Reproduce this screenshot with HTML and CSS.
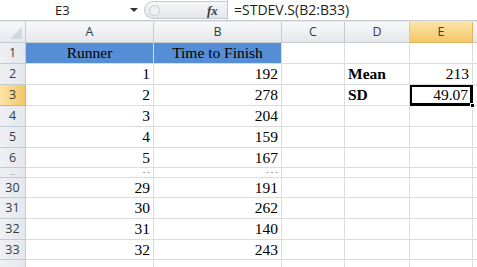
FILE: index.html
```html
<!DOCTYPE html>
<html>
<head>
<meta charset="utf-8">
<link rel="stylesheet" href="styles.css">
</head>
<body>
<div class="fbar">
  <div class="namebox"><span class="nm">E3</span><span class="dd"></span></div>
  <div class="fxzone"><span class="grip"></span><span class="fx">fx</span></div>
  <div class="formula">=STDEV.S(B2:B33)</div>
</div>
<div class="gap"></div>
<div class="sheet">
  <div class="ch corner"><span class="tri"></span></div>
  <div class="ch">A</div><div class="ch">B</div><div class="ch">C</div><div class="ch">D</div><div class="ch sel">E</div><div class="ch"></div>

  <div class="rh">1</div><div class="c blue ctr">Runner</div><div class="c blue ctr">Time to Finish</div><div class="c"></div><div class="c"></div><div class="c"></div><div class="c"></div>
  <div class="rh">2</div><div class="c num">1</div><div class="c num">192</div><div class="c"></div><div class="c b">Mean</div><div class="c num">213</div><div class="c"></div>
  <div class="rh sel">3</div><div class="c num">2</div><div class="c num">278</div><div class="c"></div><div class="c b">SD</div><div class="c num active">49.07<span class="handle"></span></div><div class="c"></div>
  <div class="rh">4</div><div class="c num">3</div><div class="c num">204</div><div class="c"></div><div class="c"></div><div class="c"></div><div class="c"></div>
  <div class="rh">5</div><div class="c num">4</div><div class="c num">159</div><div class="c"></div><div class="c"></div><div class="c"></div><div class="c"></div>
  <div class="rh">6</div><div class="c num">5</div><div class="c num">167</div><div class="c"></div><div class="c"></div><div class="c"></div><div class="c"></div>
  <div class="rh squash">--</div><div class="c num squash">- -</div><div class="c num squash">- - -</div><div class="c"></div><div class="c"></div><div class="c"></div><div class="c"></div>
  <div class="rh">30</div><div class="c num">29</div><div class="c num">191</div><div class="c"></div><div class="c"></div><div class="c"></div><div class="c"></div>
  <div class="rh">31</div><div class="c num">30</div><div class="c num">262</div><div class="c"></div><div class="c"></div><div class="c"></div><div class="c"></div>
  <div class="rh">32</div><div class="c num">31</div><div class="c num">140</div><div class="c"></div><div class="c"></div><div class="c"></div><div class="c"></div>
  <div class="rh">33</div><div class="c num">32</div><div class="c num">243</div><div class="c"></div><div class="c"></div><div class="c"></div><div class="c"></div>
  <div class="rh"></div><div class="c"></div><div class="c"></div><div class="c"></div><div class="c"></div><div class="c"></div><div class="c"></div>
</div>
</body>
</html>
```
FILE: styles.css
```css
* { box-sizing: border-box; margin: 0; padding: 0; }
html, body { width: 477px; height: 267px; overflow: hidden; background: #fff; }
body { font-family: "Liberation Serif", "Times New Roman", serif; }

.fbar {
  display: flex;
  height: 21px;
  border-bottom: 1px solid #c6cbd1;
  background: #fff;
  font-family: "Open Sans", "Liberation Sans", sans-serif;
  font-size: 13px;
  color: #1e1e1e;
}
.namebox {
  width: 142px;
  position: relative;
  display: flex;
  align-items: center;
}
.nm { position: absolute; left: 55px; top: 1px; line-height: 18px; }
.dd {
  position: absolute; left: 130px; top: 8px;
  width: 0; height: 0;
  border-left: 4px solid transparent; border-right: 4px solid transparent;
  border-top: 4px solid #333;
}
.fxzone {
  width: 83px;
  margin: 1px 0 1px 2px;
  background: linear-gradient(#f5f6f7, #e3e6e9);
  border: 1px solid #c3c8ce;
  border-right: none;
  border-radius: 9px 0 0 9px;
  position: relative;
}
.grip {
  position: absolute; left: 4px; top: 3px;
  width: 11px; height: 11px; border-radius: 50%;
  border: 1px solid #c7ccd1;
  background: #eef0f2;
}
.fx {
  position: absolute; left: 62px; top: 0px;
  font-family: "Liberation Serif", serif;
  font-style: italic; font-weight: bold;
  font-size: 13px; color: #3b3b3b;
  line-height: 17px;
}
.formula {
  flex: 1;
  border-left: 1px solid #c3c8ce;
  padding-left: 6px;
  line-height: 19px;
  font-size: 14px;
}
.gap { height: 1px; background: #e3e6ea; }

.sheet {
  display: grid;
  grid-template-columns: 26px 128px 128px 63px 65px 63px 1fr;
  grid-template-rows: 21px 21px 21px 21px 21px 21px 20px 10px 20px 21px 21px 20px 20px;
}
.ch {
  background: linear-gradient(#f7f8f9, #e5e8ec);
  border-right: 1px solid #c5cad1;
  border-bottom: 1px solid #c5cad1;
  font-family: "Open Sans", "Liberation Sans", sans-serif;
  font-size: 12.5px;
  color: #333d4a;
  text-align: center;
  line-height: 20px;
}
.ch.corner { position: relative; }
.tri {
  position: absolute; right: 3px; bottom: 3px;
  width: 0; height: 0;
  border-left: 12px solid transparent;
  border-bottom: 12px solid #d3d6da;
}
.ch.sel {
  background: linear-gradient(#fbe3a6, #f3c769);
  border-right-color: #e2b45a;
  border-bottom-color: #e2b45a;
}
.rh {
  background: linear-gradient(90deg, #eef0f3, #e4e7eb);
  border-right: 1px solid #c5cad1;
  border-bottom: 1px solid #c5cad1;
  font-family: "Open Sans", "Liberation Sans", sans-serif;
  font-size: 12.5px;
  color: #333d4a;
  text-align: center;
  line-height: 20px;
}
.rh.sel {
  background: linear-gradient(90deg, #fbe3a6, #f3c769);
  border-bottom-color: #e2b45a;
  border-right-color: #e2b45a;
}
.c {
  border-right: 1px solid #dadcdd;
  border-bottom: 1px solid #dadcdd;
  font-size: 15.5px;
  line-height: 20px;
  color: #000;
  padding: 0 3px;
  white-space: nowrap;
  overflow: hidden;
}
.num { text-align: right; }
.ctr { text-align: center; }
.b { font-weight: bold; }
.blue { background: #558ed5; }
.squash {
  line-height: 9px;
  font-size: 8px;
  color: #777;
  overflow: hidden;
}
.rh.squash { color: #8a929c; line-height: 9px; font-size: 8px; }
.active {
  position: relative;
  overflow: visible;
  box-shadow: inset 0 0 0 2px #000;
  outline: 1px solid #000;
  outline-offset: -1px;
  padding-right: 4px;
}
.handle {
  position: absolute; right: -3px; bottom: -3px;
  width: 5px; height: 5px;
  background: #000;
  border: 1px solid #fff;
}
```
